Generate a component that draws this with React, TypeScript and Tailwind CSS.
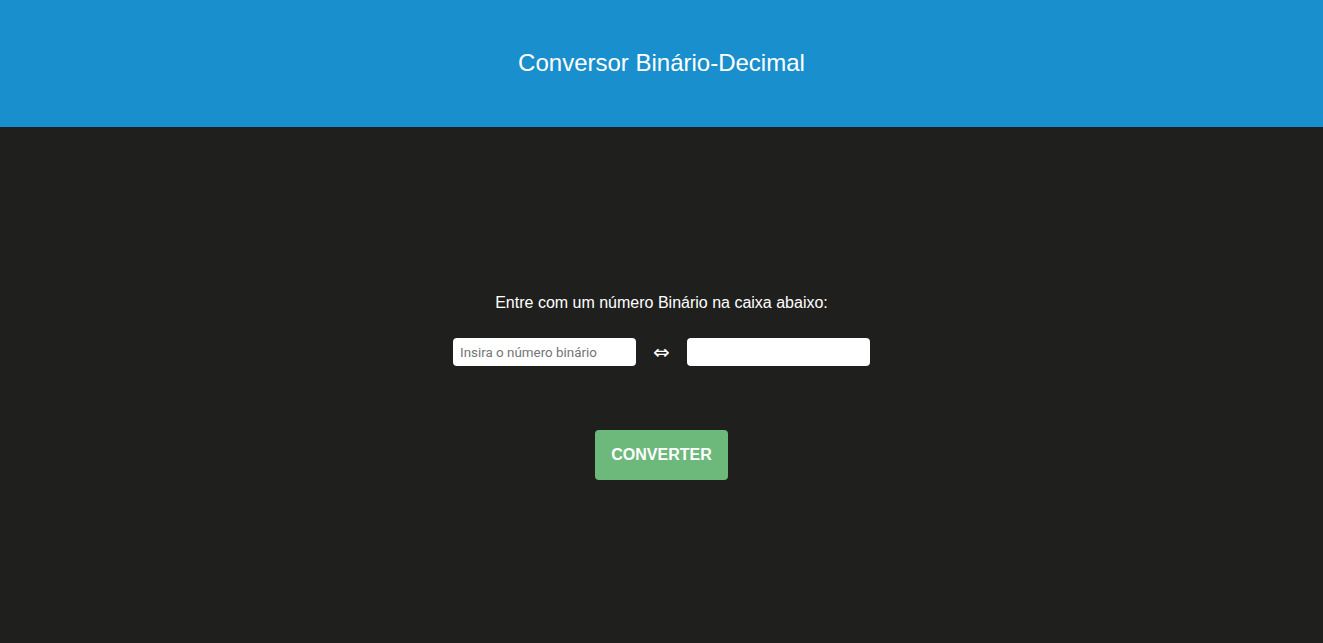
import React from "react";

export default function App() {
  const [bin, setBin] = React.useState("");
  const [dec, setDec] = React.useState("");

  return (
    <div className="min-h-screen flex flex-col bg-[#1f1f1e] font-['Liberation_Sans',Arial,sans-serif]">
      <header className="h-[127px] bg-[#1a8fcd] flex items-center justify-center">
        <h1 className="text-[24px] text-white pb-[1px]">Conversor Binário-Decimal</h1>
      </header>

      <main className="flex flex-col items-center pt-[167px]">
        <p className="text-[16px] text-white leading-[18px]">
          Entre com um número Binário na caixa abaixo:
        </p>

        <div className="mt-[26px] flex items-center">
          <input
            value={bin}
            onChange={(e) => setBin(e.target.value)}
            placeholder="Insira o número binário"
            className="w-[183px] h-[28px] rounded-[4px] bg-white px-[7px] text-[13.4px] text-gray-800 placeholder:text-[#757575] outline-none font-['Roboto',sans-serif]"
          />
          <span className="w-[51px] text-center text-white text-[20px] leading-none font-['DejaVu_Sans',sans-serif]">⇔</span>
          <input
            value={dec}
            readOnly
            className="w-[183px] h-[28px] rounded-[4px] bg-white px-[7px] text-[13px] text-gray-800 outline-none"
          />
        </div>

        <button
          onClick={() => setDec(/^[01]+$/.test(bin) ? String(parseInt(bin, 2)) : "")}
          className="mt-[64px] w-[133px] h-[50px] rounded-[4px] bg-[#6db87b] text-white font-bold text-[16px]"
        >
          CONVERTER
        </button>
      </main>
    </div>
  );
}
